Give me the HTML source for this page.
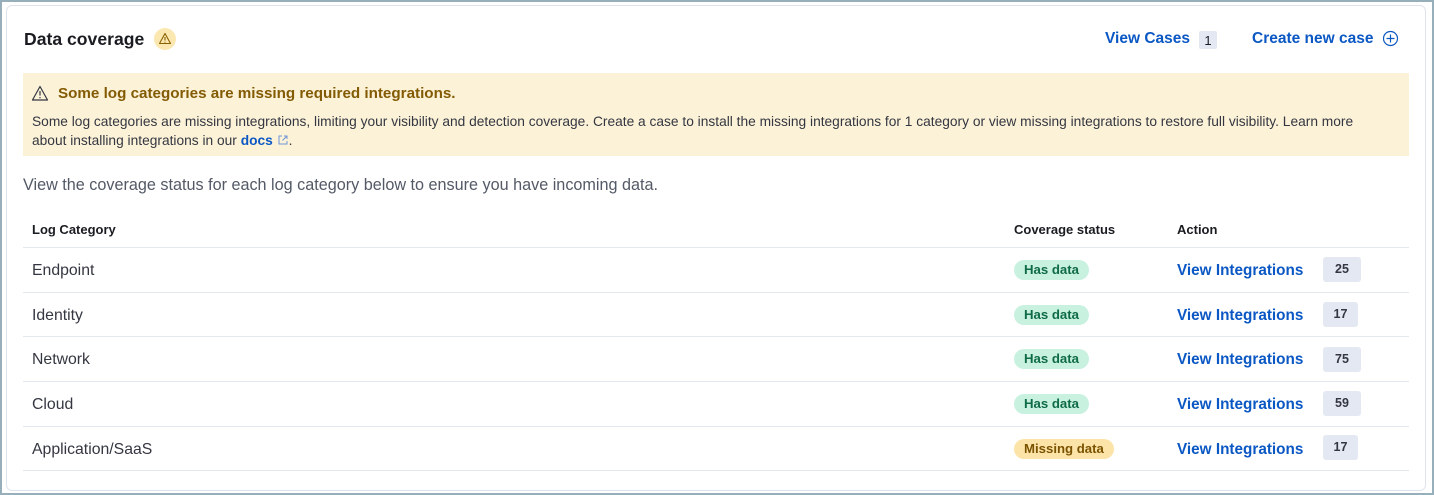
<!DOCTYPE html>
<html><head><style>
*{box-sizing:border-box;margin:0;padding:0}
body{width:1434px;height:495px;background:#97aebb;font-family:"Liberation Sans",sans-serif;overflow:hidden;position:relative}
.frame{position:absolute;left:2px;top:2px;width:1430px;height:491px;background:#fff}
.card{position:absolute;left:6px;top:5px;width:1420px;height:486px;border:1px solid #dfe4ec;border-radius:6px;background:#fff}
.abs{position:absolute}
h1{position:absolute;left:24px;top:29px;font-size:17.6px;font-weight:bold;color:#1a1c21}
.wicon{position:absolute;left:154px;top:28px;width:22px;height:22px;border-radius:50%;background:#fbe7b0}
a{color:#0b58c4;font-weight:bold;text-decoration:none}
.callout{position:absolute;left:23px;top:73px;width:1386px;height:83px;background:#fcf2d8}
.ct{position:absolute;left:35px;top:85px;font-size:15.2px;font-weight:bold;color:#835b04}
.cb{position:absolute;left:32px;top:112px;font-size:13.75px;line-height:19px;color:#343741;width:1370px}
.intro{position:absolute;left:23px;top:176px;font-size:16.2px;color:#535966}
.th{position:absolute;top:222px;font-size:13px;font-weight:bold;color:#1a1c21}
.line{position:absolute;left:23px;width:1386px;height:1px;background:#e3e7ee}
.cell{position:absolute;left:32px;font-size:15.8px;color:#343741}
.pill{position:absolute;left:1014px;height:20px;border-radius:10px;font-size:13.2px;padding:3px 10px;line-height:14px;font-weight:bold}
.g{background:#c8f1e0;color:#0f6b45}
.y{background:#fce4a8;color:#7a5200}
.vi{position:absolute;left:1177px;font-size:15.3px}
.cnt{position:absolute;left:1323px;height:25px;border-radius:3px;background:#e3e8f2;font-size:12.5px;font-weight:bold;color:#343741;text-align:center;line-height:25px}
</style></head><body>
<div class="frame"></div>
<div class="card"></div>
<h1>Data coverage</h1>
<div class="wicon"><svg width="22" height="22" viewBox="0 0 22 22"><path d="M11 5.5L16.5 15.5H5.5Z" fill="none" stroke="#8a6100" stroke-width="1.1" stroke-linejoin="round"/><path d="M11 9v3.5M11 13.8v.8" stroke="#8a6100" stroke-width="1.1"/></svg></div>
<a class="abs" style="left:1105px;top:30px;font-size:15.5px">View Cases</a>
<div class="abs" style="left:1199px;top:31px;width:18px;height:18px;background:#e3e8f2;border-radius:2px;font-size:13px;text-align:center;line-height:19px;color:#1a1c21">1</div>
<a class="abs" style="left:1252px;top:30px;font-size:15.5px">Create new case</a>
<svg class="abs" style="left:1382px;top:30px" width="17" height="17" viewBox="0 0 17 17"><circle cx="8.5" cy="8.5" r="7" fill="none" stroke="#0b58c4" stroke-width="1.2"/><path d="M8.5 4.5v8M4.5 8.5h8" stroke="#0b58c4" stroke-width="1.2"/></svg>
<div class="callout"></div>
<svg class="abs" style="left:31px;top:85px" width="18" height="17" viewBox="0 0 18 17"><path d="M9 1.5L16.5 15H1.5Z" fill="none" stroke="#343741" stroke-width="1.2" stroke-linejoin="round"/><path d="M9 6v4.5M9 12v1.2" stroke="#343741" stroke-width="1.2"/></svg>
<div class="ct" style="left:58px">Some log categories are missing required integrations.</div>
<div class="cb">Some log categories are missing integrations, limiting your visibility and detection coverage. Create a case to install the missing integrations for 1 category or view missing integrations to restore full visibility. Learn more<br>about installing integrations in our <a>docs</a> <svg width="12" height="12" viewBox="0 0 12 12" style="vertical-align:-1px"><path d="M5 2H2v8h8V7M7 2h3v3M10 2L5.5 6.5" fill="none" stroke="#6e97d6" stroke-width="1"/></svg>.</div>
<div class="intro">View the coverage status for each log category below to ensure you have incoming data.</div>
<div class="th" style="left:32px">Log Category</div>
<div class="th" style="left:1014px">Coverage status</div>
<div class="th" style="left:1177px">Action</div>
<div class="line" style="top:247px"></div>
<div class="cell" style="top:262px">Endpoint</div><div class="pill g" style="top:260px">Has data</div><a class="vi" style="top:262px">View Integrations</a><div class="cnt" style="top:257px;width:38px">25</div>
<div class="line" style="top:292px"></div>
<div class="cell" style="top:307px">Identity</div><div class="pill g" style="top:305px">Has data</div><a class="vi" style="top:307px">View Integrations</a><div class="cnt" style="top:302px;width:35px">17</div>
<div class="line" style="top:336px"></div>
<div class="cell" style="top:351px">Network</div><div class="pill g" style="top:349px">Has data</div><a class="vi" style="top:351px">View Integrations</a><div class="cnt" style="top:347px;width:38px">75</div>
<div class="line" style="top:381px"></div>
<div class="cell" style="top:396px">Cloud</div><div class="pill g" style="top:394px">Has data</div><a class="vi" style="top:396px">View Integrations</a><div class="cnt" style="top:391px;width:38px">59</div>
<div class="line" style="top:426px"></div>
<div class="cell" style="top:441px">Application/SaaS</div><div class="pill y" style="top:439px">Missing data</div><a class="vi" style="top:441px">View Integrations</a><div class="cnt" style="top:435px;width:35px">17</div>
<div class="line" style="top:470px"></div>
</body></html>
